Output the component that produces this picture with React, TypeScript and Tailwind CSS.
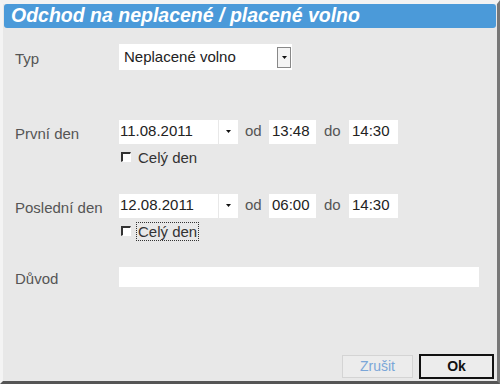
import React from "react";

function Arrow() {
  return (
    <svg width="5" height="3" viewBox="0 0 5 3" className="block">
      <path d="M0 0h5L2.5 3z" fill="#111" />
    </svg>
  );
}

function Check({ focus = false }: { focus?: boolean }) {
  return (
    <div className="flex items-center">
      <span className="h-[10px] w-[10px] border-l-[2px] border-t-[2px] border-l-[#333] border-t-[#333] border-r border-b border-r-white border-b-white bg-white" />
      <span
        className={
          "ml-[6px] px-[1px] text-[15px] leading-[17px] text-[#333] " +
          (focus ? "outline outline-1 outline-dotted outline-[#333]" : "")
        }
      >
        Celý den
      </span>
    </div>
  );
}

function DayRow({ label, date, from, to, focus }: { label: string; date: string; from: string; to: string; focus?: boolean }) {
  return (
    <div className="flex">
      <div className="w-[116px] pl-[12px] pt-[3px] text-[15px] text-[#555]">{label}</div>
      <div className="flex flex-col">
        <div className="flex h-[24px] items-center">
          <div className="flex h-[24px] w-[99px] items-center bg-white pl-[1px] text-[15px] text-[#222]">{date}</div>
          <div className="ml-[1px] flex h-[24px] w-[19px] items-center justify-center bg-white">
            <Arrow />
          </div>
          <span className="ml-[7px] w-[24px] text-[15px] text-[#555]">od</span>
          <div className="flex h-[24px] w-[47px] items-center bg-white pl-[3px] text-[15px] text-[#222]">{from}</div>
          <span className="ml-[8px] w-[25px] text-[15px] text-[#555]">do</span>
          <div className="flex h-[24px] w-[49px] items-center bg-white pl-[3px] text-[15px] text-[#222]">{to}</div>
        </div>
        <div className="ml-[2px] mt-[5px]">
          <Check focus={focus} />
        </div>
      </div>
    </div>
  );
}

export default function App() {
  return (
    <div
      className="relative h-[384px] w-[500px] border-b-[3px] border-l-[3px] border-r-[3px] border-t-[4px] border-b-[#555] border-l-[#f4f4f4] border-r-[#777] border-t-[#f2f2f2] bg-[#e8e8e8]"
      style={{ fontFamily: '"Liberation Sans", Arial, sans-serif' }}
    >
      <div className="mx-[1px] flex h-[24px] items-center rounded-[3px] bg-[#4b9ad9] pl-[7px] text-[19.5px] font-bold italic leading-none text-white">
        Odchod na neplacené / placené volno
      </div>

      <div className="mt-[16px] flex">
        <div className="w-[116px] pl-[12px] pt-[4px] text-[15px] text-[#555]">Typ</div>
        <div className="flex h-[26px] w-[173px] items-center justify-between bg-white pl-[5px] pr-[1px] text-[15px] text-[#222]">
          <span>Neplacené volno</span>
          <div className="flex h-[21px] w-[14px] items-center justify-center border border-[#888] bg-[#f4f4f4]">
            <Arrow />
          </div>
        </div>
      </div>

      <div className="mt-[49px]">
        <DayRow label="První den" date="11.08.2011" from="13:48" to="14:30" />
      </div>
      <div className="mt-[28px]">
        <DayRow label="Poslední den" date="12.08.2011" from="06:00" to="14:30" focus />
      </div>

      <div className="mt-[27px] flex">
        <div className="w-[116px] pl-[12px] pt-[1px] text-[15px] text-[#555]">Důvod</div>
        <div className="h-[20px] w-[360px] bg-white" />
      </div>

      <div className="absolute bottom-[2px] right-[3px] flex items-end gap-[6px]">
        <button className="mb-[1px] h-[23px] w-[71px] border border-[#d4d4d4] bg-[#ececec] text-[14px] text-[#7aa6d8]">Zrušit</button>
        <button className="h-[25px] w-[75px] border-2 border-[#111] bg-[#ececec] text-[14px] font-bold text-[#111]">Ok</button>
      </div>
    </div>
  );
}
